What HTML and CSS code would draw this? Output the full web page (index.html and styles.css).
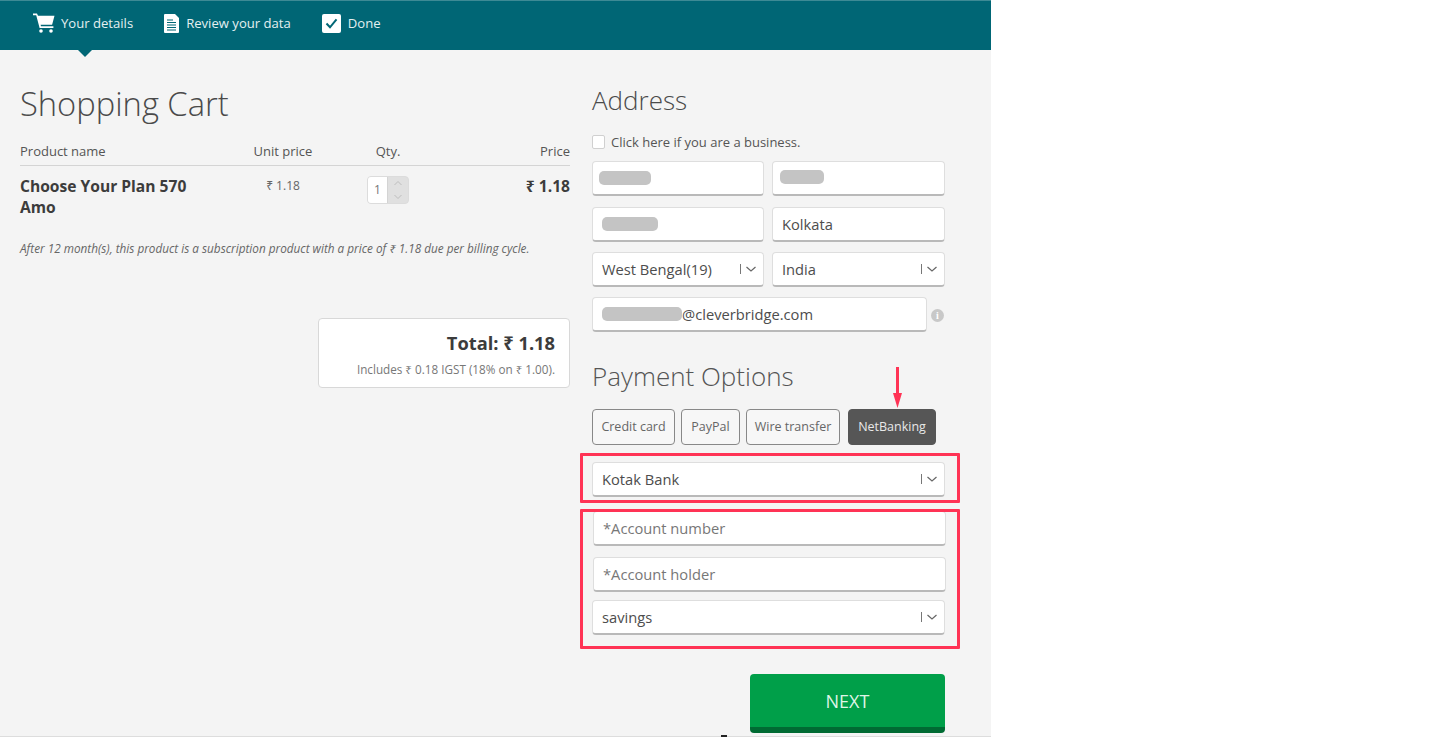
FILE: index.html
```html
<!DOCTYPE html>
<html lang="en">
<head>
<meta charset="utf-8">
<title>Shopping Cart</title>
<link rel="stylesheet" href="styles.css">
</head>
<body>
<div class="page">
  <header class="steps">
    <div class="step step-cart">
      <svg class="icon" width="22" height="20" viewBox="0 0 22 20"><path fill="#fff" d="M0 0.5h4l1 2.200h16.500l-2.400 9H7.600l.4 1.600h12.400v1.600H6.600L3.200 2.200H0z"/><circle cx="8" cy="18" r="1.800" fill="#fff"/><circle cx="18" cy="18" r="1.800" fill="#fff"/></svg>
      <span>Your details</span>
    </div>
    <div class="step step-review">
      <svg class="icon" width="15" height="19" viewBox="0 0 15 19"><path fill="#fff" d="M1 0h10l4 4v14a1 1 0 0 1-1 1H1a1 1 0 0 1-1-1V1a1 1 0 0 1 1-1z"/><path stroke="#006675" stroke-width="1.200" d="M3 6h6M3 8.500h9M3 11h9M3 13.500h9M3 16h9"/></svg>
      <span>Review your data</span>
    </div>
    <div class="step step-done">
      <svg class="icon" width="19" height="19" viewBox="0 0 19 19"><rect width="19" height="19" rx="2" fill="#fff"/><path fill="none" stroke="#006675" stroke-width="2" d="M4.500 9.500l3.500 3.800 6.500-8"/></svg>
      <span>Done</span>
    </div>
    <div class="caret"></div>
  </header>

  <main class="columns">
    <section class="cart">
      <h1 class="cart-title">Shopping Cart</h1>
      <div class="cart-head">
        <div>Product name</div>
        <div class="center">Unit price</div>
        <div class="center">Qty.</div>
        <div class="right">Price</div>
      </div>
      <div class="cart-row">
        <div class="prod-name">Choose Your Plan 570 Amo</div>
        <div class="center unit">₹ 1.18</div>
        <div class="qty-cell">
          <div class="qty">
            <div class="qty-val">1</div>
            <div class="qty-spin">
              <svg width="10" height="6" viewBox="0 0 10 6"><path fill="none" stroke="#bdbdbd" d="M1.500 5L5 1.500 8.500 5"/></svg>
              <svg width="10" height="6" viewBox="0 0 10 6"><path fill="none" stroke="#bdbdbd" d="M1.500 1L5 4.500 8.500 1"/></svg>
            </div>
          </div>
        </div>
        <div class="right line-price">₹ 1.18</div>
      </div>
      <p class="note">After 12 month(s), this product is a subscription product with a price of ₹ 1.18 due per billing cycle.</p>
      <div class="total-box">
        <div class="total">Total: ₹ 1.18</div>
        <div class="tax">Includes ₹ 0.18 IGST (18% on ₹ 1.00).</div>
      </div>
    </section>

    <section class="side">
      <h2 class="h-address">Address</h2>
      <label class="biz"><span class="check"></span>Click here if you are a business.</label>
      <div class="form-row row-name">
        <div class="field"><span class="blur blur-a"></span></div>
        <div class="field"><span class="blur blur-b"></span></div>
      </div>
      <div class="form-row row-city">
        <div class="field"><span class="blur blur-c"></span></div>
        <div class="field">Kolkata</div>
      </div>
      <div class="form-row">
        <div class="field select">West Bengal(19)<svg class="chev" width="20" height="12" viewBox="0 0 20 12"><path stroke="#777" d="M.5 1v10"/><path fill="none" stroke="#666" stroke-width="1.200" d="M6.500 4l4.500 4 4.500-4"/></svg></div>
        <div class="field select">India<svg class="chev" width="20" height="12" viewBox="0 0 20 12"><path stroke="#777" d="M.5 1v10"/><path fill="none" stroke="#666" stroke-width="1.200" d="M6.500 4l4.500 4 4.500-4"/></svg></div>
      </div>
      <div class="email-row">
        <div class="field email"><span class="blur blur-d"></span>@cleverbridge.com</div>
        <span class="info">i</span>
      </div>

      <h2 class="h-pay">Payment Options</h2>
      <div class="pay-tabs">
        <div class="tab tab-card">Credit card</div>
        <div class="tab tab-paypal">PayPal</div>
        <div class="tab tab-wire">Wire transfer</div>
        <div class="tab tab-active">NetBanking</div>
      </div>
      <div class="field select bank">Kotak Bank<svg class="chev" width="20" height="12" viewBox="0 0 20 12"><path stroke="#777" d="M.5 1v10"/><path fill="none" stroke="#666" stroke-width="1.200" d="M6.500 4l4.500 4 4.500-4"/></svg></div>
      <div class="field shifted acct-num placeholder">*Account number</div>
      <div class="field shifted acct-holder placeholder">*Account holder</div>
      <div class="field select savings">savings<svg class="chev" width="20" height="12" viewBox="0 0 20 12"><path stroke="#777" d="M.5 1v10"/><path fill="none" stroke="#666" stroke-width="1.200" d="M6.500 4l4.500 4 4.500-4"/></svg></div>
      <div class="actions"><div class="next">NEXT</div></div>
    </section>
  </main>

  <svg class="arrow" width="9" height="41" viewBox="0 0 9 41"><path fill="#ff3355" d="M3 0h3v26h3l-4.500 15L0 26h3z"/></svg>
  <div class="mark mark-bank"></div>
  <div class="mark mark-acct"></div>
  <div class="tick"></div>
</div>
</body>
</html>
```

FILE: styles.css
```css
* { box-sizing: border-box; }
html, body { margin: 0; padding: 0; background: #fff; }
body { font-family: "Open Sans", "Noto Sans", sans-serif; color: #444; width: 1451px; height: 737px; overflow: hidden; }
.page { position: relative; width: 991px; height: 737px; background: #f4f4f4; border-bottom: 1px solid #ddd; }

.steps { position: relative; height: 50px; background: #006675; border-top: 1px solid #3d8a95; display: flex; align-items: center; padding: 0 0 5px 33px; color: #e4f0f1; font-size: 13.100px; }
.step { display: flex; align-items: center; }
.step-cart { gap: 6px; }
.step-review { gap: 7px; margin-left: 31px; }
.step-done { gap: 7px; margin-left: 31px; }
.icon { display: block; flex: none; }
.caret { position: absolute; left: 78px; top: 49px; border: 7px solid transparent; border-top-color: #006675; border-bottom-width: 0; }

.columns { display: flex; padding-left: 20px; }
.cart { width: 550px; }
.side { width: 353px; margin-left: 22px; }

.cart-title { margin: 32px 0 0; font-size: 32.700px; line-height: 44px; font-weight: 300; color: #4a4a4a; }
.cart-head, .cart-row { display: grid; grid-template-columns: 210px 106px 104px 130px; }
.cart-head { margin-top: 16px; height: 24px; font-size: 13px; line-height: 18px; color: #555; border-bottom: 1px solid #d4d4d4; }
.center { text-align: center; }
.right { text-align: right; }
.cart-row { padding-top: 10px; height: 65px; }
.prod-name { font-size: 15.600px; font-weight: 700; line-height: 21px; color: #3c3c3c; padding-right: 20px; }
.unit { font-size: 12px; line-height: 20px; color: #666; }
.qty-cell { display: flex; justify-content: center; }
.qty { display: flex; width: 42px; height: 28px; border: 1px solid #dcdcdc; border-radius: 4px; background: #e0e0e0; overflow: hidden; }
.qty-val { width: 20px; background: #fff; font-size: 12px; line-height: 26px; color: #777; text-align: center; border-right: 1px solid #d4d4d4; }
.qty-spin { flex: 1; display: flex; flex-direction: column; justify-content: center; align-items: center; gap: 8px; }
.qty-spin svg { display: block; }
.line-price { font-size: 15.600px; font-weight: 700; line-height: 21px; color: #3c3c3c; }
.note { margin: 9px 0 0; font-size: 11.750px; line-height: 16px; font-style: italic; color: #666; white-space: nowrap; }
.total-box { margin: 62px 0 0 298px; width: 252px; height: 70px; background: #fff; border: 1px solid #d8d8d8; border-radius: 4px; padding: 12px 14px 0 0; text-align: right; }
.total { font-size: 18.300px; font-weight: 700; line-height: 24px; color: #3c3c3c; }
.tax { margin-top: 6px; font-size: 11.700px; line-height: 16px; color: #777; white-space: nowrap; }

.h-address { margin: 32px 0 0; font-size: 26px; line-height: 36px; font-weight: 300; color: #4a4a4a; }
.biz { display: flex; align-items: center; gap: 6px; margin-top: 15px; height: 18px; font-size: 13px; color: #555; }
.check { width: 13px; height: 14px; background: #fff; border: 1px solid #d0d0d0; border-radius: 2px; }

.form-row { display: grid; grid-template-columns: 172px 173px; gap: 8px; margin-top: 10px; }
.row-city { margin-top: 11px; }
.field { display: flex; align-items: center; height: 35px; padding: 0 0 0 9px; background: #fff; border: 1px solid #dedede; border-bottom: 2px solid #b9b9b9; border-radius: 4px; font-size: 14.700px; color: #4d4d4d; white-space: nowrap; }
.select { justify-content: space-between; padding-right: 3px; }
.chev { display: block; flex: none; }
.blur { display: inline-block; height: 14px; background: #c4c4c4; border-radius: 5px; }
.blur-a { width: 52px; margin-left: -3px; }
.blur-b { width: 44px; margin-left: -2px; margin-top: -2px; }
.blur-c { width: 56px; }
.blur-d { width: 80px; }

.email-row { display: flex; align-items: center; margin-top: 10px; }
.email { width: 335px; flex: none; }
.info { width: 13px; height: 13px; margin: 2px 0 0 4px; border-radius: 50%; background: #c8c8c8; color: #fff; font: 700 10px/13px "Liberation Serif", serif; text-align: center; }

.h-pay { margin: 26px 0 0; font-size: 26px; line-height: 36px; font-weight: 300; color: #555; }
.pay-tabs { display: flex; margin-top: 15px; }
.tab { height: 36px; display: flex; align-items: center; justify-content: center; padding-bottom: 2px; font-size: 12.500px; color: #666; border: 1px solid #888; border-radius: 4px; background: #f7f7f7; }
.tab-card { width: 83px; }
.tab-paypal { width: 59px; margin-left: 6px; }
.tab-wire { width: 94px; margin-left: 6px; }
.tab-active { width: 88px; margin-left: 8px; background: #565656; border-color: #565656; color: #e8e8e8; }

.bank { margin-top: 17px; }
.shifted { position: relative; left: 1px; }
.acct-num { margin-top: 14px; }
.acct-holder { margin-top: 11px; }
.savings { margin-top: 8px; }
.placeholder { color: #777; }
.actions { display: flex; justify-content: flex-end; margin-top: 39px; }
.next { width: 195px; height: 59px; display: flex; align-items: center; justify-content: center; background: #009f49; border-bottom: 6px solid #006b33; border-radius: 4px; color: #dff5e7; font-size: 18px; }

.arrow { position: absolute; left: 893px; top: 367px; display: block; }
.mark { position: absolute; left: 580px; width: 380px; border: 3px solid #ff3355; border-radius: 1px; }
.mark-bank { top: 453px; height: 50px; }
.mark-acct { top: 509px; height: 140px; }
.tick { position: absolute; left: 721px; top: 735px; width: 6px; height: 2px; background: #222; }
```
